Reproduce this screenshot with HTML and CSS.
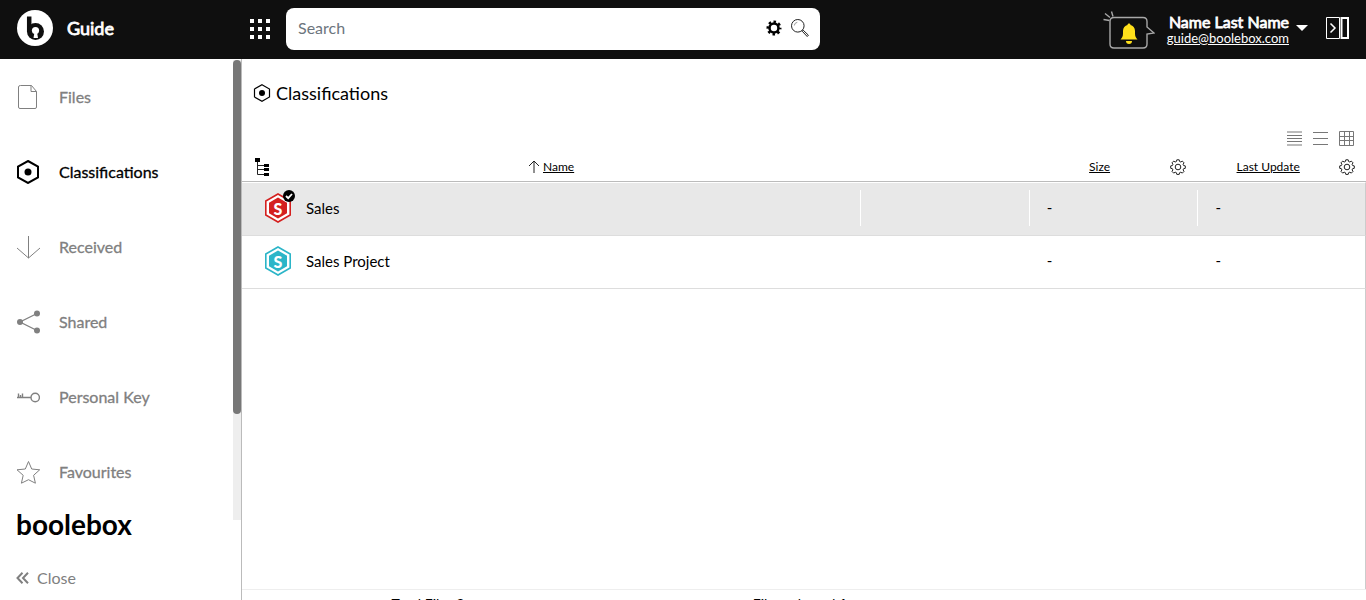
FILE: index.html
```html
<!DOCTYPE html>
<html lang="en">
<head>
    <meta charset="UTF-8">
    <meta name="viewport" content="width=device-width, initial-scale=1.0">
    <title>Classifications</title>
    <link rel="stylesheet" href="styles.css">
</head>
<body>
    <header class="topbar">
        <div class="brand">
            <svg width="36" height="36" viewBox="0 0 36 36">
                <circle cx="18" cy="18" r="18" fill="#fff"/>
                <path d="M12.200 6.500v15.500" stroke="#0f0f0f" stroke-width="4.500"/>
                <circle cx="18.500" cy="21.500" r="8.500" fill="#0f0f0f"/>
                <circle cx="18.500" cy="20.500" r="3.600" fill="#fff"/>
                <path d="M17.500 22h2.500l1 6h-4.500z" fill="#fff"/>
            </svg>
            <span class="brand-name">Guide</span>
        </div>
        <button class="apps" aria-label="Apps">
            <svg width="22" height="21" viewBox="0 0 22 21" fill="#fff" shape-rendering="crispEdges">
                <path d="M1 1h4v4H1zM9 1h4v4H9zM17 1h4v4h-4zM1 9h4v4H1zM9 9h4v4H9zM17 9h4v4h-4zM1 17h4v4H1zM9 17h4v4H9zM17 17h4v4h-4z"/>
            </svg>
        </button>
        <form class="search">
            <input type="text" placeholder="Search" aria-label="Search">
            <button type="button" aria-label="Search settings">
                <svg width="16" height="16" viewBox="0 0 16 16" fill="none" stroke="#000">
                    <circle cx="8" cy="8" r="4.500" stroke-width="2.600"/>
                    <circle cx="8" cy="8" r="6.300" stroke-width="2.400" stroke-dasharray="2.500 2.448" stroke-dashoffset="1.250"/>
                </svg>
            </button>
            <button type="button" aria-label="Search">
                <svg width="18" height="18" viewBox="0 0 18 18" fill="none" stroke="#222">
                    <circle cx="6.800" cy="6.800" r="6.300"/>
                    <path d="M3.300 6.500a3.500 3.500 0 0 1 3-3.200" stroke="#999"/>
                    <path d="M11.200 12.200l1-1 5.200 5-1.200 1.300z"/>
                </svg>
            </button>
        </form>
        <div class="account">
            <button class="bell" aria-label="Notifications">
                <svg width="52" height="38" viewBox="0 0 52 38" fill="none" stroke="#a8a8a8" stroke-width="1.400">
                    <path d="M11 6.500h29q4 0 4 4v5.500l7 6-7 1v10q0 4-4 4H11q-4 0-4-4v-22.500q0-4 4-4z"/>
                    <path d="M.5 8.500l6 1M2 2.500l5 4M8.500.500l1.500 5"/>
                    <path d="M17.500 28.500c1.500-1.500 2.500-3 2.500-6v-2.500c0-3 2-5.500 4.500-6 0-2 3-2 3 0 2.500.500 4.500 3 4.500 6v2.500c0 3 1 4.500 2.500 6z" fill="#ffe01b" stroke="none"/>
                    <path d="M23 30h6a3 3 0 0 1-6 0z" fill="#ffe01b" stroke="none"/>
                </svg>
            </button>
            <div class="user">
                <span class="user-name">Name Last Name</span>
                <a href="#">guide@boolebox.com</a>
            </div>
            <button class="caret" aria-label="Account menu">
                <svg width="12" height="6" viewBox="0 0 12 6"><path d="M0 0h12L6 6z" fill="#fff"/></svg>
            </button>
            <button class="panel" aria-label="Toggle panel">
                <svg width="23" height="22" viewBox="0 0 23 22" fill="none" stroke="#fff">
                    <path d="M.5.500h13v21H.5z"/>
                    <path d="M15.500 1h6.500v20h-6.500z" stroke-width="2"/>
                    <path d="M4.500 6.500L9 11l-4.500 4.500" stroke-width="1.500"/>
                </svg>
            </button>
        </div>
    </header>

    <div class="page">
        <aside class="sidebar">
            <div class="nav-wrap">
                <nav>
                    <a href="#">
                        <svg width="24" height="24" viewBox="0 0 24 24"><path d="M4.500.500h11l5 6V22q0 1.500-1.500 1.500H4Q2.500 23.500 2.500 22V2Q2.500.500 4.500.500zM15 .5V6.500h5.500"/></svg>
                        Files
                    </a>
                    <a href="#" class="active">
                        <svg width="24" height="24" viewBox="0 0 24 24"><path d="M12 1l10 5.500v11L12 23 2 17.500v-11z" stroke-width="2"/><circle cx="12" cy="12" r="3.500" fill="#000" stroke="none"/></svg>
                        Classifications
                    </a>
                    <a href="#">
                        <svg width="24" height="24" viewBox="0 0 24 24"><path d="M12.500 1v22M1 13l11.500 10L24 13"/></svg>
                        Received
                    </a>
                    <a href="#">
                        <svg width="24" height="24" viewBox="0 0 24 24"><path d="M21 3.500L4 12l17 8.500" stroke-width="1.300"/><g fill="#808080" stroke="none"><circle cx="21" cy="3.500" r="3"/><circle cx="4" cy="12" r="3"/><circle cx="21" cy="20.500" r="3"/></g></svg>
                        Shared
                    </a>
                    <a href="#">
                        <svg width="24" height="24" viewBox="0 0 24 24"><path d="M1 12.500h14M2.500 12.500V8.500M4.500 12V10M6.500 12.500V8.500" stroke-width="1.400"/><circle cx="19.200" cy="12.500" r="4.200" stroke-width="1.400"/></svg>
                        Personal Key
                    </a>
                    <a href="#">
                        <svg width="24" height="24" viewBox="0 0 24 24"><path d="M12.500 1.500l3.200 7.500 8 .8-6.100 5.500 1.800 7.900-6.900-3.500-7.100 3.500 1.800-7.900L1 9.800 9.300 9z"/></svg>
                        Favourites
                    </a>
                </nav>
                <div class="scrollbar"><div class="thumb"></div></div>
            </div>
            <div class="logo">boolebox</div>
            <button class="close">
                <svg width="13" height="12" viewBox="0 0 13 12" fill="none" stroke="#808080" stroke-width="2"><path d="M6.500.8L1.500 6l5 5.200M12 .8L7 6l5 5.200"/></svg>
                Close
            </button>
        </aside>

        <main class="content">
            <h1>
                <svg width="18" height="18" viewBox="0 0 18 18"><path d="M9 .8l7.500 4.200v8L9 17.200 1.500 13V5z" fill="none" stroke="#000" stroke-width="1.200"/><circle cx="9" cy="9" r="3"/></svg>
                Classifications
            </h1>
            <div class="views">
                <button aria-label="Compact list"><svg width="16" height="16" viewBox="0 0 16 16" stroke="#777"><path d="M0 1h15M0 14h15" stroke="#bbb" stroke-width="2"/><path d="M0 4.500h15M0 7.500h15M0 10.500h15"/></svg></button>
                <button aria-label="List"><svg width="16" height="16" viewBox="0 0 16 16" stroke="#777"><path d="M0 1.500h15M0 7.500h15M0 13.500h15"/></svg></button>
                <button aria-label="Grid"><svg width="16" height="16" viewBox="0 0 16 16" fill="none" stroke="#777"><path d="M.5.500h14v14H.5zM5.500.500v14M10.500.500v14M.5 5.500h14M.5 9.500h14"/></svg></button>
            </div>
            <table>
                <thead>
                    <tr>
                        <th class="col-name">
                            <div class="head">
                                <button class="tree" aria-label="Tree view"><svg width="16" height="20" viewBox="0 0 16 20"><path d="M3.500 3v14.500H11M3.500 8.500H11M3.500 12.500H11" fill="none" stroke="#222"/><path d="M1 1h5v4H1zM10 7h5v3h-5zM10 11h5v3h-5zM10 16h5v3h-5z"/></svg></button>
                                <span class="sort">
                                    <svg width="12" height="14" viewBox="0 0 12 14"><path d="M6 1v12M1 6l5-5 5 5" fill="none" stroke="#222"/></svg>
                                    <a href="#">Name</a>
                                </span>
                            </div>
                        </th>
                        <th></th>
                        <th>
                            <div class="head">
                                <a href="#" class="label">Size</a>
                                <button aria-label="Size column settings"><svg width="16" height="16" viewBox="0 0 16 16" fill="none" stroke="#222"><path d="M6.800.8h2.400l.4 1.700 1.200.5 1.500-.9 1.700 1.700-.9 1.500.5 1.200 1.700.4v2.400l-1.700.4-.5 1.200.9 1.500-1.700 1.700-1.500-.9-1.200.5-.4 1.700H6.800l-.4-1.700-1.200-.5-1.500.9L2 12.400l.9-1.500-.5-1.200-1.700-.4V6.900l1.700-.4.5-1.200L2 3.800l1.700-1.700 1.500.9 1.200-.5z"/><circle cx="8" cy="8" r="2.800"/></svg></button>
                            </div>
                        </th>
                        <th>
                            <div class="head">
                                <a href="#" class="label">Last Update</a>
                                <button aria-label="Last update column settings"><svg width="16" height="16" viewBox="0 0 16 16" fill="none" stroke="#222"><path d="M6.800.8h2.400l.4 1.700 1.200.5 1.500-.9 1.700 1.700-.9 1.500.5 1.200 1.700.4v2.400l-1.700.4-.5 1.200.9 1.500-1.700 1.700-1.500-.9-1.200.5-.4 1.700H6.800l-.4-1.700-1.200-.5-1.500.9L2 12.400l.9-1.500-.5-1.200-1.700-.4V6.900l1.700-.4.5-1.200L2 3.800l1.700-1.700 1.500.9 1.200-.5z"/><circle cx="8" cy="8" r="2.800"/></svg></button>
                            </div>
                        </th>
                    </tr>
                </thead>
                <tbody>
                    <tr class="selected">
                        <td>
                            <div class="item">
                                <span class="badge red">
                                    <svg width="28" height="30" viewBox="0 0 28 30"><path d="M14 1l12.200 7v14L14 29 1.800 22V8z" fill="#fff" stroke="currentColor" stroke-width="1.600"/><path d="M14 4.500l9 5.200v10.600l-9 5.200-9-5.200V9.700z" fill="currentColor"/></svg>
                                    <b>S</b>
                                    <svg class="tick" width="12" height="12" viewBox="0 0 12 12"><circle cx="6" cy="6" r="6" fill="#000"/><path d="M3 6l2.200 2.200L9 4" fill="none" stroke="#fff" stroke-width="1.800"/></svg>
                                </span>
                                Sales
                            </div>
                        </td>
                        <td><div class="cell"></div></td>
                        <td><div class="cell">-</div></td>
                        <td><div class="cell">-</div></td>
                    </tr>
                    <tr>
                        <td>
                            <div class="item">
                                <span class="badge teal">
                                    <svg width="28" height="30" viewBox="0 0 28 30"><path d="M14 1l12.200 7v14L14 29 1.800 22V8z" fill="#fff" stroke="currentColor" stroke-width="1.600"/><path d="M14 4.500l9 5.200v10.600l-9 5.200-9-5.200V9.700z" fill="currentColor"/></svg>
                                    <b>S</b>
                                </span>
                                Sales Project
                            </div>
                        </td>
                        <td><div class="cell"></div></td>
                        <td><div class="cell">-</div></td>
                        <td><div class="cell">-</div></td>
                    </tr>
                </tbody>
            </table>
            <div class="filler"></div>
            <footer>
                <span>Total Files <b>2</b></span>
                <span>Files selected <b>1</b></span>
                <span></span>
            </footer>
        </main>
    </div>
</body>
</html>
```
FILE: styles.css
```css
* { box-sizing: border-box; }
body { margin: 0; height: 100vh; overflow: hidden; display: flex; flex-direction: column; font-family: Lato, "Liberation Sans", sans-serif; font-size: 16px; color: #000; background: #fff; }
button { padding: 0; border: 0; background: none; font: inherit; color: inherit; cursor: pointer; }
svg { display: block; flex: none; }
a { color: inherit; }

/* top bar */
.topbar { flex: none; height: 59px; display: flex; align-items: center; padding: 0 17px 3px; background: #0f0f0f; color: #fff; }
.brand { width: 232px; display: flex; align-items: center; gap: 14px; }
.brand-name { font-size: 18px; -webkit-text-stroke: 0.8px; }
.search { width: 534px; height: 42px; margin: 2px 0 0 15px; padding: 0 11px 2px 12px; display: flex; align-items: center; gap: 9px; background: #fff; border-radius: 8px; }
.search input { flex: 1; min-width: 0; padding: 0 0 2px; border: 0; outline: 0; background: none; font: inherit; }
.search input::placeholder { color: #6c757d; }
.account { margin-left: auto; display: flex; align-items: center; }
.bell { margin: 3px 12px 0 0; }
.user { display: flex; flex-direction: column; align-items: flex-end; padding-top: 2px; }
.user-name { line-height: 17px; -webkit-text-stroke: 0.8px; }
.user a { font-size: 13px; line-height: 16px; }
.caret { margin: 0 18px 0 7px; }

/* sidebar */
.page { flex: 1; min-height: 0; display: flex; }
.sidebar { flex: none; width: 242px; padding-top: 1px; border-right: 1px solid #bbb; }
.nav-wrap { height: calc(100vh - 140px); display: flex; overflow: hidden; }
nav { flex: 1; }
nav a { height: 75px; display: flex; align-items: center; gap: 19px; padding: 0 0 2px 16px; color: #808080; text-decoration: none; -webkit-text-stroke: 0.3px; }
nav svg { fill: none; stroke: #808080; }
nav .active { color: #000; }
nav .active svg { stroke: #000; }
.scrollbar { width: 8px; background: #eee; }
.thumb { height: 77%; border-radius: 4px; background: #777; }
.logo { height: 34px; margin-top: -14px; padding-left: 16px; font-size: 28px; line-height: 36px; font-weight: bold; }
.close { display: flex; align-items: center; gap: 8px; margin: 28px 0 0 16px; color: #808080; }

/* list */
.content { flex: 1; min-width: 0; height: calc(100vh - 41px); display: flex; flex-direction: column; }
h1 { display: flex; align-items: center; gap: 5px; margin: 22px 0 0 11px; font-size: 18px; line-height: 24px; font-weight: normal; }
.views { display: flex; justify-content: flex-end; gap: 10px; height: 16px; margin: 26px 11px 0; }
table { width: 100%; table-layout: fixed; border-collapse: separate; border-spacing: 0; }
th { width: 15%; height: 35px; padding: 5px 0 0; border-bottom: 1px solid #bbb; font-size: 12px; font-weight: normal; }
.col-name { width: 55%; }
.head { position: relative; display: flex; align-items: center; justify-content: center; padding-right: 11px; }
.col-name .head { padding: 0; }
.label { flex: 1; text-align: center; }
.tree { position: absolute; left: 12px; }
.sort { display: flex; align-items: center; gap: 3px; }
td { height: 53px; padding: 0 0 2px; border-bottom: 1px solid #ddd; font-size: 15px; }
td:last-child { border-right: 1px solid #ccc; }
.selected td { height: 54px; border-top: 1px solid #fff; background: #e8e8e8; }
.item { display: flex; align-items: center; gap: 14px; padding-left: 22px; }
.cell { height: 36px; padding-left: 17px; line-height: 34px; border-left: 1px solid #fff; }
.badge { position: relative; }
.badge b { position: absolute; inset: 0; text-align: center; font-size: 16px; line-height: 31px; color: #fff; font-weight: 900; }
.red { color: #d4201f; }
.teal { color: #2bb5c8; }
.tick { position: absolute; top: -3px; right: -3px; }
.filler { flex: 1; border-right: 1px solid #ccc; }
footer { flex: none; height: 29px; display: flex; align-items: center; padding-right: 8px; border-top: 1px solid #eee; font-size: 14px; line-height: 20px; }
footer span { flex: 1; text-align: center; }
```
